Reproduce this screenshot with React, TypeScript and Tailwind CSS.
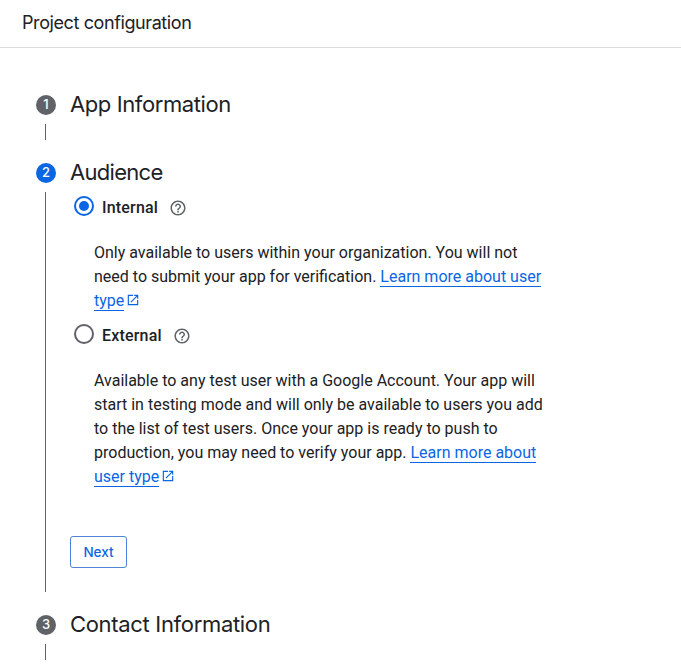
import type { ReactNode } from 'react';

function HelpIcon() {
  return (
    <svg className="mt-1 h-[18px] w-[18px] shrink-0 fill-[#5f6368]" viewBox="0 0 24 24">
      <path d="M11 18h2v-2h-2v2zm1-16C6.48 2 2 6.48 2 12s4.48 10 10 10 10-4.48 10-10S17.52 2 12 2zm0 18c-4.41 0-8-3.59-8-8s3.59-8 8-8 8 3.59 8 8-3.59 8-8 8zm0-14c-2.21 0-4 1.79-4 4h2c0-1.1.9-2 2-2s2 .9 2 2c0 2-3 1.75-3 5h2c0-2.25 3-2.5 3-5 0-2.21-1.79-4-4-4z" />
    </svg>
  );
}

function ExternalLink({ children }: { children: ReactNode }) {
  return (
    <a className="text-[#0b66e4]">
      <span className="border-b border-[#0b66e4]">{children}</span>
      <svg className="ml-[2px] inline-block h-[14px] w-[14px] fill-current align-[-1px]" viewBox="0 0 24 24">
        <path d="M19 19H5V5h7V3H3v18h18v-9h-2v7zM14 3v2h3.59l-9.83 9.83 1.41 1.41L19 6.41V10h2V3h-7z" />
      </svg>
    </a>
  );
}

function Option({ label, checked = false, children }: { label: string; checked?: boolean; children: ReactNode }) {
  return (
    <div>
      <div className="flex h-7 items-center pl-1">
        <span
          className={
            checked
              ? 'flex h-5 w-5 items-center justify-center rounded-full border-2 border-[#0b66e4]'
              : 'h-5 w-5 rounded-full border-2 border-[#5f6368]'
          }
        >
          {checked && <span className="h-[10px] w-[10px] rounded-full bg-[#0b66e4]" />}
        </span>
        <span className="mt-1 mr-[11px] ml-2 text-base leading-6 font-medium tracking-[0.18px]">{label}</span>
        <HelpIcon />
      </div>
      <p className="mt-[21px] w-[480px] pl-6 text-base leading-6">{children}</p>
    </div>
  );
}

interface StepProps {
  number: number;
  title: string;
  tracking: string;
  active?: boolean;
  children?: ReactNode;
}

function Step({ number, title, tracking, active = false, children }: StepProps) {
  return (
    <section>
      <div className="flex h-7 items-center gap-[14px]">
        <span
          className={`flex h-5 w-5 items-center justify-center rounded-full font-[Inter,sans-serif] text-[13px] font-medium text-white ${
            active ? 'bg-[#0b66e4]' : 'bg-[#5f6368]'
          }`}
        >
          {number}
        </span>
        <h2 className={`mb-[2px] font-[Inter,sans-serif] text-[22px] leading-7 ${tracking}`}>{title}</h2>
      </div>
      <div className="mt-[5px] mb-[19px] ml-[9px] flex min-h-4 border-l border-[#5f6368] pl-6">{children}</div>
    </section>
  );
}

export default function App() {
  return (
    <div className="h-[669px] overflow-hidden bg-white font-[Roboto,sans-serif] text-[#202124]">
      <header className="flex h-12 items-center border-b border-[#dadce0] pb-[2px] pl-[22px]">
        <h1 className="font-[Inter,sans-serif] text-lg leading-6 tracking-[-0.4px]">Project configuration</h1>
      </header>
      <main className="pt-[43px] pl-9">
        <Step number={1} title="App Information" tracking="tracking-[-0.4px]" />
        <Step number={2} title="Audience" tracking="tracking-[-0.7px]" active>
          <div className="flex flex-col gap-[7px] pb-6">
            <Option label="Internal" checked>
              Only available to users within your organization. You will not need to submit your app for
              verification. <ExternalLink>Learn more about user type</ExternalLink>
            </Option>
            <Option label="External">
              Available to any test user with a Google Account. Your app will start in testing mode and will only be
              available to users you add to the list of test users. Once your app is ready to push to production, you
              may need to verify your app. <ExternalLink>Learn more about user type</ExternalLink>
            </Option>
            <button className="mt-10 h-8 w-[57px] rounded-[3px] border border-[#4f83d8] font-[Inter,sans-serif] text-[13.5px] font-medium text-[#0b66e4]">
              Next
            </button>
          </div>
        </Step>
        <Step number={3} title="Contact Information" tracking="tracking-[-0.32px]" />
      </main>
    </div>
  );
}
